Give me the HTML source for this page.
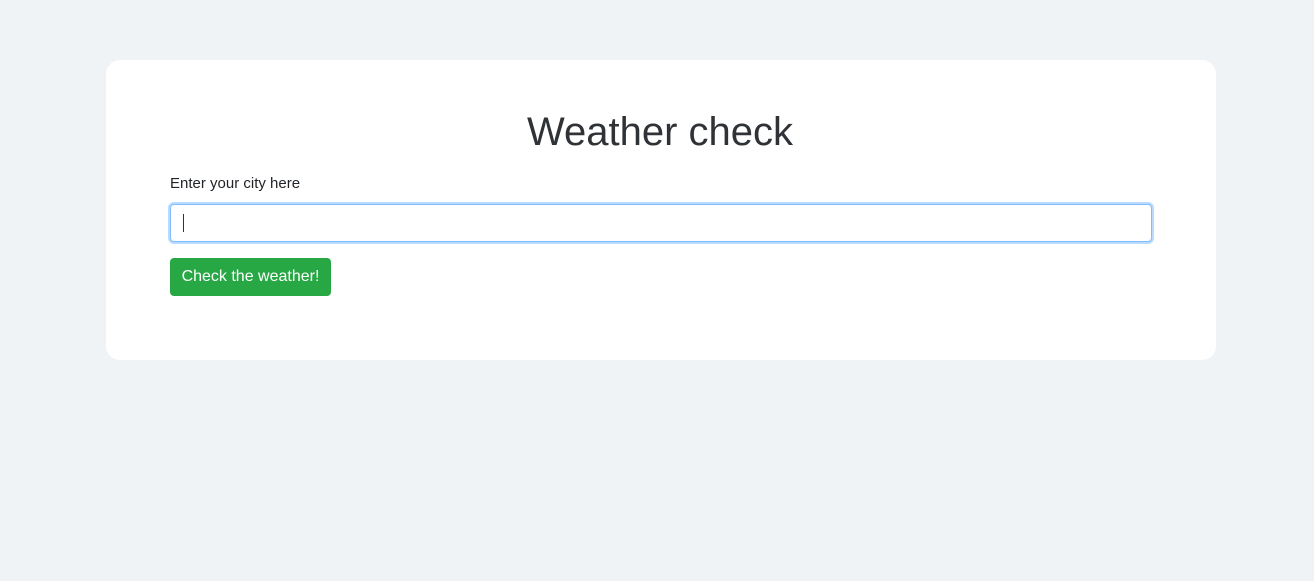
<!DOCTYPE html>
<html><head><style>
body{margin:0;background:#f0f3f6;font-family:"Liberation Sans",sans-serif;width:1314px;height:581px;position:relative}
.card{position:absolute;left:106px;top:60px;width:1110px;height:300px;background:#fff;border-radius:14px}
h1{position:absolute;left:0;right:0;top:108px;margin:0;text-align:center;font-size:40px;font-weight:normal;color:#2f3337;line-height:48px;padding-left:6px}
.lbl{position:absolute;left:170px;top:175px;font-size:15px;color:#212529}
.in{position:absolute;left:170px;top:204px;width:980px;height:36px;border:1px solid #80bdff;border-radius:4px;box-shadow:0 0 0 2px #b9dbff;background:#fff}
.cur{position:absolute;left:12px;top:9px;width:1px;height:18px;background:#333}
.btn{position:absolute;left:170px;top:258px;width:161px;height:38px;background:#28a745;border-radius:4px;color:#fff;font-size:16px;line-height:38px;text-align:center}
</style></head><body>
<div class="card"></div>
<h1>Weather check</h1>
<div class="lbl">Enter your city here</div>
<div class="in"><div class="cur"></div></div>
<div class="btn">Check the weather!</div>
</body></html>
